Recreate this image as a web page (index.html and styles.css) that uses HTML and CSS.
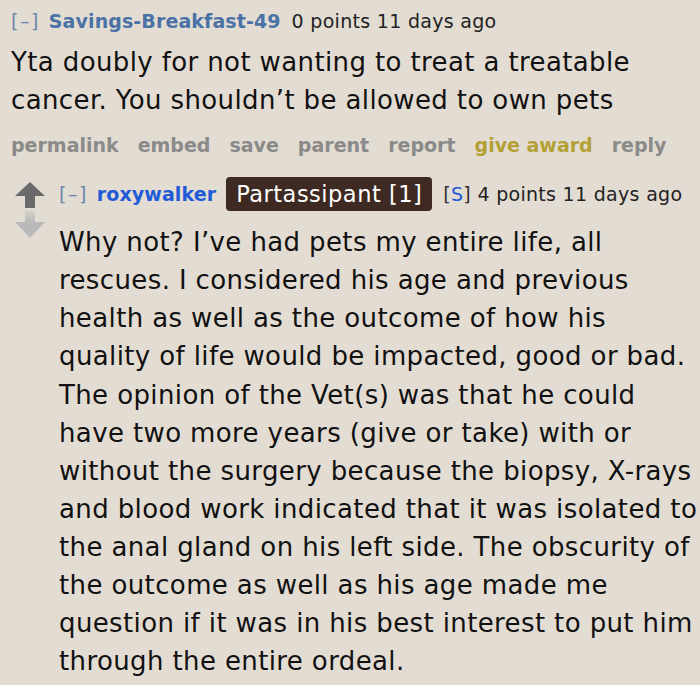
FILE: index.html
```html
<!DOCTYPE html>
<html>
<head>
<meta charset="utf-8">
<link rel="stylesheet" href="styles.css">
</head>
<body>
<div class="page">
  <div class="comment top">
    <div class="tagline">
      <span class="expand">[–]</span>
      <a class="author dim">Savings-Breakfast-49</a>
      <span class="meta">0 points 11 days ago</span>
    </div>
    <div class="body">Yta doubly for not wanting to treat a treatable cancer. You shouldn’t be allowed to own pets</div>
    <ul class="buttons">
      <li>permalink</li>
      <li>embed</li>
      <li>save</li>
      <li>parent</li>
      <li>report</li>
      <li class="award">give award</li>
      <li>reply</li>
    </ul>
  </div>
  <div class="comment child">
    <div class="votes">
      <svg class="arrow up" width="30" height="26" viewBox="0 0 30 26"><path d="M15 0 L30 14 L20 14 L20 26 L10 26 L10 14 L0 14 Z"/></svg>
      <svg class="arrow down" width="30" height="28" viewBox="0 0 30 28">
        <defs>
          <linearGradient id="fade" x1="0" y1="0" x2="0" y2="1">
            <stop offset="0" stop-color="#b9b9b9" stop-opacity="0.25"/>
            <stop offset="0.45" stop-color="#b9b9b9" stop-opacity="1"/>
            <stop offset="1" stop-color="#b9b9b9" stop-opacity="1"/>
          </linearGradient>
        </defs>
        <path d="M10 0 L20 0 L20 12 L30 12 L15 28 L0 12 L10 12 Z" fill="url(#fade)"/>
      </svg>
    </div>
    <div class="entry">
      <div class="tagline">
        <span class="expand">[–]</span>
        <a class="author">roxywalker</a>
        <span class="flair">Partassipant [1]</span>
        <span class="meta"><span class="sub">[<span class="s">S</span>]</span> 4 points 11 days ago</span>
      </div>
      <div class="body">Why not? I’ve had pets my entire life, all rescues. I considered his age and previous health as well as the outcome of how his quality of life would be impacted, good or bad. The opinion of the Vet(s) was that he could have two more years (give or take) with or without the surgery because the biopsy, <span class="nobr">X-rays</span> and blood work indicated that it was isolated to the anal gland on his left side. The obscurity of the outcome as well as his age made me question if it was in his best interest to put him through the entire ordeal.</div>
    </div>
  </div>
</div>
</body>
</html>
```
FILE: styles.css
```css
html, body {
  margin: 0;
  padding: 0;
  background: #e3dcd2;
}
body {
  font-family: "DejaVu Sans", Verdana, sans-serif;
  color: #111;
  width: 700px;
  height: 685px;
  overflow: hidden;
}
.page {
  padding: 8px 0 0 11px;
}
.tagline {
  font-size: 19px;
  line-height: 26px;
  display: flex;
  align-items: center;
  white-space: nowrap;
}
.expand {
  color: #6b88b0;
  margin-right: 9px;
  letter-spacing: 1.5px;
}
.author {
  font-weight: bold;
  color: #1f5ad8;
  letter-spacing: 0.1px;
}
.author.dim {
  color: #4a72a6;
}
.meta {
  color: #222;
  margin-left: 11px;
  letter-spacing: 0.3px;
}
.body {
  font-size: 26px;
  line-height: 38.1px;
  letter-spacing: 0.38px;
}
.top .body {
  margin-top: 9px;
  width: 689px;
}
.buttons {
  list-style: none;
  margin: 13px 0 0 0;
  padding: 0;
  display: flex;
  gap: 19px;
  font-size: 19px;
  font-weight: bold;
  color: #8a8a8a;
  line-height: 26px;
}
.buttons .award {
  color: #b3a136;
}
.child {
  display: flex;
  margin-top: 19px;
}
.votes {
  display: flex;
  flex-direction: column;
  width: 44px;
  padding: 5px 0 0 4px;
}
.arrow.up path { fill: #6a6a6a; }
.arrow.down { margin-top: 2px; }
.entry {
  flex: 1;
}
.child .tagline {
  height: 34px;
}
.flair {
  background: #3e2a22;
  color: #fff;
  border-radius: 4px;
  padding: 4px 10px;
  font-size: 22.5px;
  line-height: 26px;
  letter-spacing: 0.5px;
  margin-left: 10px;
}
.sub { color: #333; }
.sub .s { color: #1f5ad8; }
.child .body {
  margin-top: 12px;
  width: 641px;
}
.nobr { white-space: nowrap; }
```
